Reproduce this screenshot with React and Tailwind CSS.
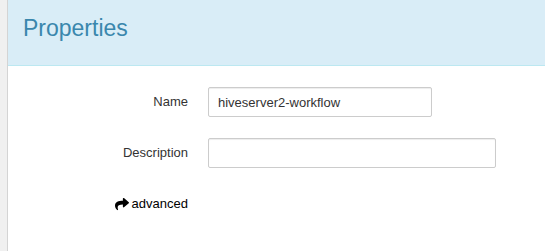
import React from 'react';
import { FaShare } from 'react-icons/fa';

export default function App() {
  return (
    <div
      className="flex w-[545px] h-[251px] bg-white overflow-hidden"
      style={{ fontFamily: '"Liberation Sans", Arial, sans-serif' }}
    >
      {/* левая полоса */}
      <div className="w-[8px] shrink-0 bg-[#f0f0f0] border-r border-[#d4d4d4]" />

      <div className="flex-1 flex flex-col">
        {/* Заголовок */}
        <div className="h-[66px] bg-[#d9edf7] border-b border-[#bce8f1] pl-[15px] pt-[17px]">
          <h2 className="text-[23px] leading-[23px] text-[#3a87ad]">Properties</h2>
        </div>

        {/* Форма */}
        <div className="pt-[21px] text-[13px] text-[#333]">
          <div className="flex items-center">
            <label className="w-[180px] text-right">Name</label>
            <input
              type="text"
              defaultValue="hiveserver2-workflow"
              className="ml-[20px] w-[224px] h-[30px] border border-[#ccc] rounded-[2px] px-[9px] text-[13px] text-[#333] shadow-[inset_0_1px_1px_rgba(0,0,0,0.075)] outline-none"
            />
          </div>
          <div className="flex items-center mt-[21px]">
            <label className="w-[180px] text-right">Description</label>
            <input
              type="text"
              className="ml-[20px] w-[288px] h-[30px] border border-[#ccc] rounded-[2px] px-[9px] text-[13px] text-[#333] shadow-[inset_0_1px_1px_rgba(0,0,0,0.075)] outline-none"
            />
          </div>
          <div className="flex items-center justify-end w-[180px] mt-[26px]">
            <a className="flex items-center gap-[3px] text-black cursor-pointer">
              <FaShare size={14} />
              <span>advanced</span>
            </a>
          </div>
        </div>
      </div>
    </div>
  );
}
